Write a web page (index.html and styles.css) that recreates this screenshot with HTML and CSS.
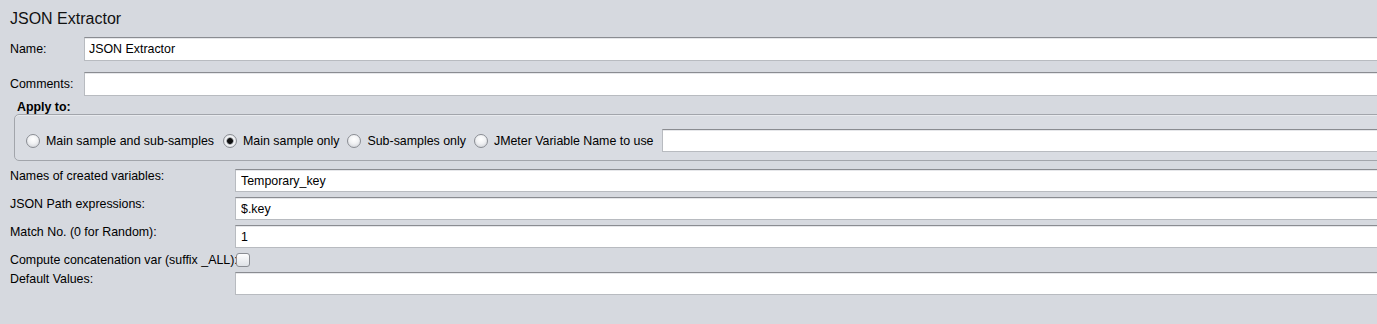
FILE: index.html
```html
<!DOCTYPE html>
<html lang="en">
<head>
    <meta charset="UTF-8">
    <title>JSON Extractor</title>
    <link rel="stylesheet" href="styles.css">
</head>
<body>

    <div class="panel">
        <h1 class="title">JSON Extractor</h1>

        <div class="top-row">
            <label class="top-label">Name:</label>
            <input class="field" type="text" value="JSON Extractor">
        </div>
        <div class="top-row">
            <label class="top-label">Comments:</label>
            <input class="field" type="text" value="">
        </div>

        <div class="group-title">Apply to:</div>
        <div class="group-box">
            <div class="radio-item"><span class="radio"></span>Main sample and sub-samples</div>
            <div class="radio-item"><span class="radio checked"></span>Main sample only</div>
            <div class="radio-item"><span class="radio"></span>Sub-samples only</div>
            <div class="radio-item"><span class="radio"></span>JMeter Variable Name to use</div>
            <input class="field var-field" type="text" value="">
        </div>

        <div class="settings">
            <label class="set-label">Names of created variables:</label>
            <input class="field" type="text" value="Temporary_key">

            <label class="set-label">JSON Path expressions:</label>
            <input class="field" type="text" value="$.key">

            <label class="set-label">Match No. (0 for Random):</label>
            <input class="field" type="text" value="1">

            <label class="set-label">Compute concatenation var (suffix _ALL):</label>
            <div class="check-cell"><span class="checkbox"></span></div>

            <label class="set-label">Default Values:</label>
            <input class="field" type="text" value="">
        </div>
    </div>

</body>
</html>
```

FILE: styles.css
```css
html, body {
    margin: 0;
    padding: 0;
    overflow: hidden;
}
body {
    background: #d6d9df;
    font-family: "Liberation Sans", Arial, sans-serif;
    font-size: 12.4px;
    color: #000;
}
.panel {
    margin-right: -6px;
}
.title {
    margin: 0;
    padding: 9px 0 0 10px;
    height: 28px;
    font-size: 16px;
    font-weight: normal;
    line-height: 19px;
    color: #111;
}
.top-row {
    display: flex;
    align-items: center;
    height: 24px;
    margin-bottom: 11px;
}
.top-label {
    width: 74px;
    padding-left: 10px;
    flex: none;
}
.field {
    flex: 1;
    min-width: 0;
    box-sizing: border-box;
    height: 24px;
    margin: 0;
    padding: 0 4px;
    font-family: "Liberation Sans", Arial, sans-serif;
    font-size: 12.4px;
    color: #000;
    background: #fff;
    border: 1px solid #b8bbc0;
    border-top-color: #8a8c91;
    border-radius: 0;
    box-shadow: inset 0 1px 0 #e6e7ea;
    outline: none;
}
.group-title {
    margin-top: -7px;
    padding-left: 17px;
    font-weight: bold;
    line-height: 14px;
}
.group-box {
    display: flex;
    align-items: center;
    margin: 0 0 0 14px;
    padding: 14px 0 8px 11px;
    border: 1px solid #a2a5ab;
    border-radius: 5px;
    box-shadow: inset 0 1px 0 #e8eaee;
    background: #d9dce2;
}
.radio-item {
    display: flex;
    align-items: center;
    gap: 6px;
    margin-right: 8px;
    white-space: nowrap;
}
.radio-item:first-child {
    margin-right: 9px;
}
.radio {
    display: inline-block;
    box-sizing: border-box;
    width: 14px;
    height: 14px;
    border-radius: 50%;
    border: 1px solid #8a8d93;
    background: radial-gradient(circle at 50% 35%, #ffffff 0%, #f1f2f4 45%, #c9ccd2 100%);
}
.radio.checked {
    background: radial-gradient(circle, #111 0 2.5px, #6d7075 3px, #eef0f3 4px, #f4f5f7 50%, #c9ccd2 100%);
}
.var-field {
    height: 23px;
}
.settings {
    display: grid;
    grid-template-columns: 235px 1fr;
    row-gap: 5px;
    margin-top: 8px;
}
.settings .field {
    height: 23px;
    padding-left: 5px;
}
.set-label {
    padding-left: 10px;
    line-height: 14px;
    white-space: nowrap;
}
.check-cell {
    height: 13px;
}
.checkbox {
    display: block;
    box-sizing: border-box;
    width: 14px;
    height: 14px;
    margin-left: 1px;
    border: 1px solid #8a8d93;
    border-radius: 3px;
    background: linear-gradient(#fdfdfe, #dfe2e7);
}
```
